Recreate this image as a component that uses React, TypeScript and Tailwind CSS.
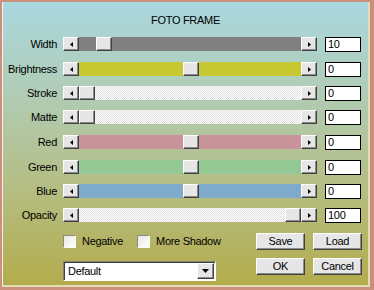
import React from "react";

type Row = {
  label: string;
  value: string;
  track: string;
  offset: string;
  gap: string;
};

const CHECKER =
  "bg-[repeating-conic-gradient(#e0e0e0_0_25%,#ffffff_0_50%)] bg-[length:2px_2px]";

const ROWS: Row[] = [
  { label: "Width", value: "10", track: "bg-[#808080]", offset: "w-[17px]", gap: "mt-0" },
  { label: "Brightness", value: "0", track: "bg-[#c8c932]", offset: "w-[104px]", gap: "mt-[10px]" },
  { label: "Stroke", value: "0", track: CHECKER, offset: "w-0", gap: "mt-[9px]" },
  { label: "Matte", value: "0", track: CHECKER, offset: "w-0", gap: "mt-[9px]" },
  { label: "Red", value: "0", track: "bg-[#c89499]", offset: "w-[104px]", gap: "mt-[10px]" },
  { label: "Green", value: "0", track: "bg-[#94c894]", offset: "w-[104px]", gap: "mt-[10px]" },
  { label: "Blue", value: "0", track: "bg-[#7eaacb]", offset: "w-[104px]", gap: "mt-[9px]" },
  { label: "Opacity", value: "100", track: CHECKER, offset: "w-[206px]", gap: "mt-[9px]" },
];

const raised =
  "border border-t-white border-l-white border-r-[#404040] border-b-[#404040] bg-[#e6e6e6] shadow-[inset_-1px_-1px_#8c8c8c]";

function Arrow({ dir }: { dir: "left" | "right" | "down" }) {
  if (dir === "down") {
    return (
      <svg width="7" height="4" viewBox="0 0 7 4">
        <path d="M0 0h7L3.5 4z" fill="#000" />
      </svg>
    );
  }
  return (
    <svg width="3" height="5" viewBox="0 0 3 5">
      <path d={dir === "left" ? "M3 0v5L0 2.5z" : "M0 0v5l3-2.5z"} fill="#000" />
    </svg>
  );
}

function Slider({ track, offset }: { track: string; offset: string }) {
  return (
    <div className="flex h-[14px] w-[254px]">
      <div className={`${raised} flex h-[14px] w-[16px] items-center justify-center`}>
        <Arrow dir="left" />
      </div>
      <div className={`flex flex-1 ${track}`}>
        <div className={offset} />
        <div className={`${raised} h-[14px] w-[16px]`} />
      </div>
      <div className={`${raised} flex h-[14px] w-[16px] items-center justify-center`}>
        <Arrow dir="right" />
      </div>
    </div>
  );
}

function Check({ label }: { label: string }) {
  return (
    <div className="flex items-center gap-[6px]">
      <div className="h-[13px] w-[13px] border border-t-[#8a8a80] border-l-[#8a8a80] border-r-[#f8f8f0] border-b-[#f8f8f0] bg-[linear-gradient(135deg,#e8e8e0,#ffffff)]" />
      <span>{label}</span>
    </div>
  );
}

function Button({ label }: { label: string }) {
  return (
    <div className={`${raised} flex h-[17px] w-[49px] items-center justify-center`}>
      {label}
    </div>
  );
}

export default function App() {
  return (
    <div className="h-[290px] w-[374px] bg-[#cc8f7d] p-[2px] font-['Liberation_Sans',Arial,sans-serif] text-[11px] leading-[13px] tracking-[-0.3px] text-black">
      <div className="flex h-[285px] w-[368px] flex-col border-l border-l-[#f4f4ec] border-r-2 border-b-2 border-r-[#e4dcb4] border-b-[#e4dcb4] bg-[linear-gradient(180deg,#a9d8e0_0%,#b0cdb8_30%,#b4c08c_60%,#b4ac4c_100%)]">
        <div className="mt-[12px] text-center">FOTO FRAME</div>
        <div className="mt-[10px] flex flex-col">
          {ROWS.map((r) => (
            <div key={r.label} className={`flex items-start ${r.gap}`}>
              <div className="w-[54px] text-right leading-[14px]">{r.label}</div>
              <div className="ml-[6px]">
                <Slider track={r.track} offset={r.offset} />
              </div>
              <div className="ml-[8px] h-[15px] w-[36px] border border-black bg-white pl-[2px] leading-[13px]">
                {r.value}
              </div>
            </div>
          ))}
        </div>
        <div className="mt-[10px] flex">
          <div className="ml-[60px] flex flex-col">
            <div className="mt-[2px] flex gap-[14px]">
              <Check label="Negative" />
              <Check label="More Shadow" />
            </div>
            <div className="mt-[13px] flex h-[20px] w-[153px] border border-t-[#808080] border-l-[#808080] border-r-white border-b-white bg-white shadow-[inset_1px_1px_#404040]">
              <div className="flex-1 pl-[4px] pt-[3px]">Default</div>
              <div className={`${raised} mr-[1px] mt-[1px] flex h-[16px] w-[17px] items-center justify-center`}>
                <Arrow dir="down" />
              </div>
            </div>
          </div>
          <div className="ml-auto mr-[6px] flex flex-col gap-[8px]">
            <div className="flex gap-[8px]">
              <Button label="Save" />
              <Button label="Load" />
            </div>
            <div className="flex gap-[8px]">
              <Button label="OK" />
              <Button label="Cancel" />
            </div>
          </div>
        </div>
      </div>
    </div>
  );
}
